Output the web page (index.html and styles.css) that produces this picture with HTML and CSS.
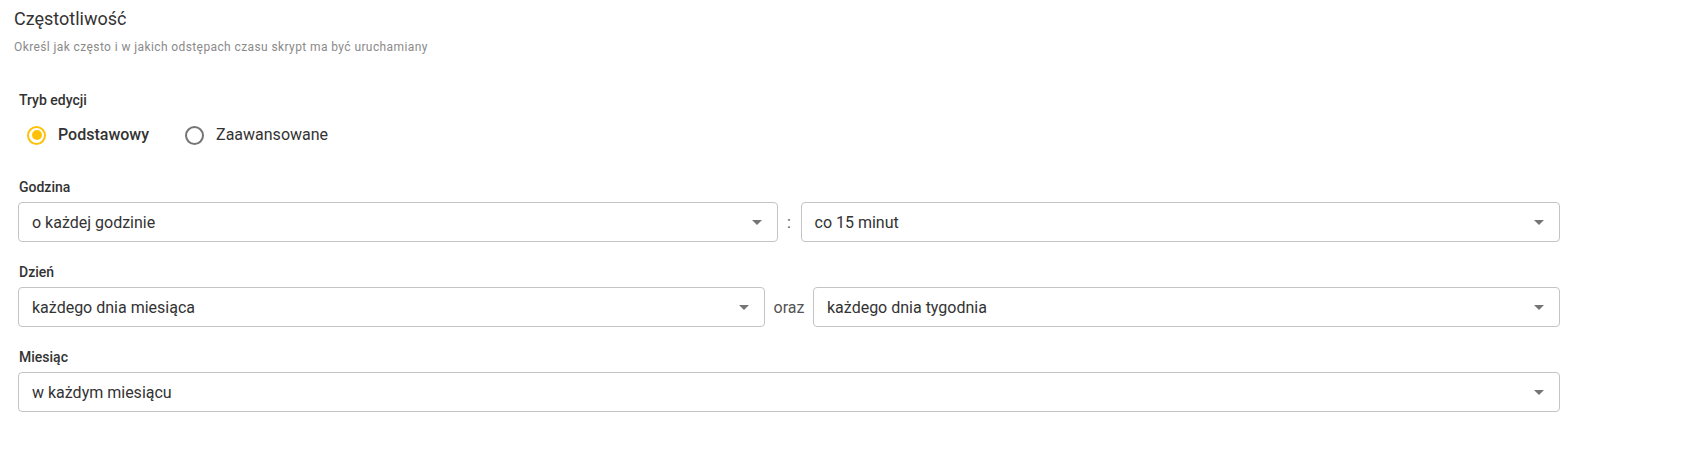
FILE: index.html
```html
<!DOCTYPE html>
<html lang="pl">
<head>
<meta charset="utf-8">
<title>Częstotliwość</title>
<link rel="stylesheet" href="styles.css">
</head>
<body>
<section class="panel">
  <header class="head">
    <h2 class="title">Częstotliwość</h2>
    <p class="subtitle">Określ jak często i w jakich odstępach czasu skrypt ma być uruchamiany</p>
  </header>
  <div class="form">
    <div class="field mode">
      <div class="label">Tryb edycji</div>
      <div class="radios">
        <label class="radio checked"><span class="dot"></span><span class="rtext">Podstawowy</span></label>
        <label class="radio"><span class="dot"></span><span class="rtext">Zaawansowane</span></label>
      </div>
    </div>
    <div class="field">
      <div class="label">Godzina</div>
      <div class="row">
        <div class="select"><span class="value">o każdej godzinie</span><span class="arrow"></span></div>
        <span class="sep colon">:</span>
        <div class="select"><span class="value">co 15 minut</span><span class="arrow"></span></div>
      </div>
    </div>
    <div class="field">
      <div class="label">Dzień</div>
      <div class="row">
        <div class="select"><span class="value">każdego dnia miesiąca</span><span class="arrow"></span></div>
        <span class="sep oraz">oraz</span>
        <div class="select"><span class="value">każdego dnia tygodnia</span><span class="arrow"></span></div>
      </div>
    </div>
    <div class="field">
      <div class="label">Miesiąc</div>
      <div class="row">
        <div class="select"><span class="value">w każdym miesiącu</span><span class="arrow"></span></div>
      </div>
    </div>
  </div>
</section>
</body>
</html>
```

FILE: styles.css
```css
* { box-sizing: border-box; }
html, body { margin: 0; padding: 0; background: #fff; }
body {
  font-family: Roboto, "Liberation Sans", Arial, sans-serif;
  color: #333;
}
.panel { padding: 7px 0 0 0; }
.head { padding-left: 14px; }
.title {
  margin: 0;
  font-size: 18px;
  font-weight: 400;
  line-height: 24px;
  color: #333;
}
.subtitle {
  margin: 8px 0 0 0;
  font-size: 12px;
  line-height: 16px;
  letter-spacing: 0.4px;
  color: #8a8a8a;
}
.form {
  width: 1560px;
  padding: 35px 0 0 18px;
  display: flex;
  flex-direction: column;
  gap: 20px;
}
.label {
  font-size: 14px;
  font-weight: 500;
  line-height: 20px;
  color: #333;
  padding-left: 1px;
}
.field { display: flex; flex-direction: column; gap: 5px; }
.mode { gap: 10px; margin-bottom: 7px; }
.radios { display: flex; align-items: center; height: 30px; }
.radio {
  display: flex;
  align-items: center;
  padding-left: 9px;
  margin-right: 27px;
  font-size: 16px;
  line-height: 20px;
}
.dot {
  width: 19px;
  height: 19px;
  border-radius: 50%;
  border: 2px solid #757575;
  margin-right: 12px;
  position: relative;
}
.radio.checked .dot { border-color: #ffc107; }
.radio.checked .dot::after {
  content: "";
  position: absolute;
  left: 2.5px;
  top: 2.5px;
  width: 10px;
  height: 10px;
  border-radius: 50%;
  background: #ffc107;
}
.radio.checked .rtext { font-weight: 500; }
.row { display: flex; align-items: center; }
.select {
  flex: 1;
  height: 40px;
  border: 1px solid #c4c4c4;
  border-radius: 4px;
  display: flex;
  align-items: center;
  padding: 0 15px 0 13px;
  font-size: 16px;
  color: #333;
}
.value { flex: 1; }
.arrow {
  width: 0;
  height: 0;
  border-left: 5px solid transparent;
  border-right: 5px solid transparent;
  border-top: 5px solid #757575;
}
.sep { font-size: 16px; color: #555; text-align: center; }
.colon { width: 23px; }
.oraz { width: 48px; }
```
